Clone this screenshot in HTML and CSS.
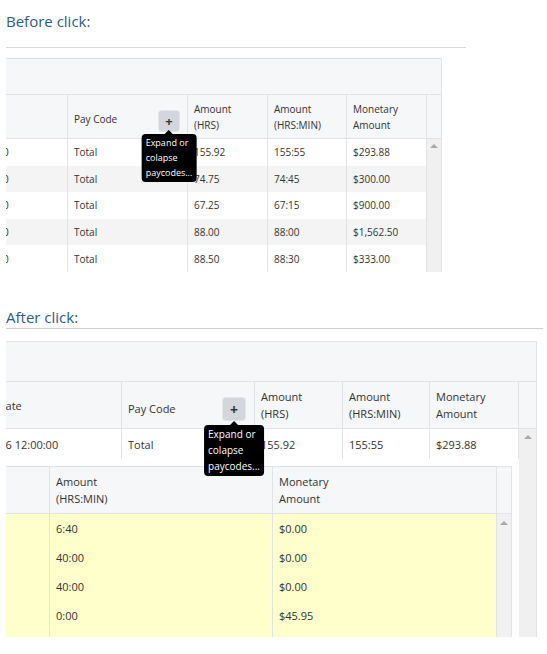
FILE: index.html
```html
<!DOCTYPE html>
<html lang="en">
<head>
    <meta charset="UTF-8">
    <meta name="viewport" content="width=device-width, initial-scale=1.0">
    <title>Pay Code Grid - Expand / Collapse</title>
    <link rel="stylesheet" href="styles.css">
</head>
<body>

<!-- Collapsed state -->
<h3 class="step-title step-before">Before click:</h3>
<hr class="step-rule rule-short">

<div class="grid grid-sm">
    <div class="grid-band"></div>
    <table class="grid-table">
        <colgroup>
            <col style="width:149px">
            <col style="width:120px">
            <col style="width:80px">
            <col style="width:79px">
            <col style="width:80px">
            <col style="width:14px">
        </colgroup>
        <thead>
            <tr class="head-row">
                <th class="date-col">Apply Date</th>
                <th>
                    <div class="code-head">
                        <span>Pay Code</span>
                        <span class="toggle">+<span class="tip">Expand or<br>colapse<br>paycodes...</span></span>
                    </div>
                </th>
                <th>Amount<br>(HRS)</th>
                <th>Amount<br>(HRS:MIN)</th>
                <th>Monetary<br>Amount</th>
                <th class="scroll-head"></th>
            </tr>
        </thead>
        <tbody>
            <tr>
                <td class="date-col">1/1/2016 12:00:00</td>
                <td>Total</td>
                <td>155.92</td>
                <td>155:55</td>
                <td>$293.88</td>
                <td class="scroll" rowspan="5"><span class="scroll-up"></span></td>
            </tr>
            <tr>
                <td class="date-col">1/1/2016 12:00:00</td>
                <td>Total</td>
                <td>74.75</td>
                <td>74:45</td>
                <td>$300.00</td>
            </tr>
            <tr>
                <td class="date-col">1/1/2016 12:00:00</td>
                <td>Total</td>
                <td>67.25</td>
                <td>67:15</td>
                <td>$900.00</td>
            </tr>
            <tr>
                <td class="date-col">1/1/2016 12:00:00</td>
                <td>Total</td>
                <td>88.00</td>
                <td>88:00</td>
                <td>$1,562.50</td>
            </tr>
            <tr>
                <td class="date-col">1/1/2016 12:00:00</td>
                <td>Total</td>
                <td>88.50</td>
                <td>88:30</td>
                <td>$333.00</td>
            </tr>
        </tbody>
    </table>
</div>

<!-- Expanded state -->
<h3 class="step-title step-after">After click:</h3>
<hr class="step-rule rule-long">

<div class="grid grid-lg">
    <div class="grid-band"></div>
    <table class="grid-table">
        <colgroup>
            <col style="width:164px">
            <col style="width:133px">
            <col style="width:88px">
            <col style="width:87px">
            <col style="width:89px">
            <col style="width:17px">
        </colgroup>
        <thead>
            <tr class="head-row">
                <th class="date-col">Apply Date</th>
                <th>
                    <div class="code-head">
                        <span>Pay Code</span>
                        <span class="toggle">+<span class="tip">Expand or<br>colapse<br>paycodes...</span></span>
                    </div>
                </th>
                <th>Amount<br>(HRS)</th>
                <th>Amount<br>(HRS:MIN)</th>
                <th>Monetary<br>Amount</th>
                <th class="scroll-head"></th>
            </tr>
        </thead>
        <tbody>
            <tr class="main-row">
                <td class="date-col">1/1/2016 12:00:00</td>
                <td>Total</td>
                <td>155.92</td>
                <td>155:55</td>
                <td>$293.88</td>
                <td class="scroll" rowspan="2"><span class="scroll-up"></span></td>
            </tr>
            <tr>
                <td class="detail-cell" colspan="5">
                    <!-- paycode breakdown -->
                    <div class="detail-grid">
                        <table class="grid-table detail-table">
                            <colgroup>
                                <col style="width:92px">
                                <col style="width:223px">
                                <col style="width:224px">
                                <col style="width:14px">
                            </colgroup>
                            <thead>
                                <tr class="head-row">
                                    <th></th>
                                    <th>Amount<br>(HRS:MIN)</th>
                                    <th>Monetary<br>Amount</th>
                                    <th class="scroll-head"></th>
                                </tr>
                            </thead>
                            <tbody>
                                <tr>
                                    <td></td>
                                    <td>6:40</td>
                                    <td>$0.00</td>
                                    <td class="scroll" rowspan="5"><span class="scroll-up"></span></td>
                                </tr>
                                <tr>
                                    <td></td>
                                    <td>40:00</td>
                                    <td>$0.00</td>
                                </tr>
                                <tr>
                                    <td></td>
                                    <td>40:00</td>
                                    <td>$0.00</td>
                                </tr>
                                <tr>
                                    <td></td>
                                    <td>0:00</td>
                                    <td>$45.95</td>
                                </tr>
                                <tr>
                                    <td></td>
                                    <td>8:00</td>
                                    <td>$0.00</td>
                                </tr>
                            </tbody>
                        </table>
                    </div>
                </td>
            </tr>
        </tbody>
    </table>
</div>

</body>
</html>
```

FILE: styles.css
```css
/* Base */
* {
    box-sizing: border-box;
}

body {
    margin: 0;
    padding: 0 0 0 6px;
    background: #fff;
    color: #333;
    font-family: "Open Sans", "Noto Sans", sans-serif;
}

/* Step headings */
.step-title {
    margin: 0;
    font-size: 15px;
    font-weight: normal;
    line-height: 20px;
    color: #2b5c8f;
}

.step-before {
    padding-top: 11px;
}

.step-after {
    margin-top: 35px;
}

.step-rule {
    height: 0;
    margin: 0;
    border: 0;
    border-top: 1px solid #d9d9d9;
}

.rule-short {
    width: 460px;
    margin-top: 16px;
}

.rule-long {
    width: 537px;
    margin-top: 1px;
    border-top-color: #cfcfcf;
}

/* Grid wrapper - scrolled to the right, clipped at the bottom */
.grid {
    overflow: hidden;
    border-top: 1px solid #e1e3e6;
    border-right: 1px solid #e1e3e6;
}

.grid-sm {
    width: 436px;
    height: 214px;
    margin-top: 10px;
}

.grid-lg {
    width: 531px;
    height: 296px;
    margin-top: 12px;
}

.grid-band {
    background: #f6f7f9;
    border-bottom: 1px solid #e1e3e6;
}

.grid-sm .grid-band {
    height: 36px;
}

.grid-lg .grid-band {
    height: 40px;
}

/* Tables */
.grid-table {
    border-collapse: separate;
    border-spacing: 0;
    table-layout: fixed;
}

.grid-sm .grid-table {
    width: 522px;
    margin-left: -87px;
    font-size: 10px;
}

.grid-lg .grid-table {
    width: 578px;
    margin-left: -48px;
    font-size: 11px;
}

.grid-table th {
    padding: 0 6px;
    background: #f6f7f9;
    font-weight: normal;
    text-align: left;
    vertical-align: middle;
    border-right: 1px solid #e1e3e6;
    border-bottom: 1px solid #e1e3e6;
    white-space: nowrap;
}

.grid-table td {
    padding: 0 6px;
    background: #fff;
    border-right: 1px solid #e1e3e6;
    white-space: nowrap;
    vertical-align: middle;
}

.grid-lg .grid-table .date-col {
    padding-left: 8px;
}

.grid-sm .head-row {
    height: 44px;
    line-height: 16px;
}

.grid-sm tbody tr {
    height: 26.6px;
}

.grid-sm tbody tr:nth-child(even) td {
    background: #f4f4f4;
}

.grid-lg .head-row {
    height: 47px;
    line-height: 17px;
}

.grid-lg .main-row {
    height: 30px;
}

/* Scrollbar track */
.grid-table th.scroll-head {
    padding: 0;
    border-right: 0;
}

.grid-table td.scroll {
    padding: 0;
    vertical-align: top;
    background: #f0f0f0;
    border-right: 0;
}

.scroll-up {
    display: block;
    width: 0;
    height: 0;
    margin: 5px auto 0;
    border-left: 4px solid transparent;
    border-right: 4px solid transparent;
    border-bottom: 4px solid #a9a9a9;
}

.grid-lg .scroll-up {
    margin-top: 6px;
}

/* Pay code header with toggle button */
.code-head {
    display: flex;
    align-items: center;
    justify-content: space-between;
    padding-top: 5px;
}

.toggle {
    position: relative;
    display: flex;
    align-items: center;
    justify-content: center;
    width: 20px;
    height: 20px;
    margin: 3px 2px 0 0;
    border-radius: 3px;
    background: #d3d6dc;
    box-shadow: 0 0 0 1px #e3e5e9;
    font-size: 13px;
    font-weight: bold;
    color: #333;
}

.grid-lg .code-head {
    padding-top: 6px;
}

.grid-lg .toggle {
    width: 22px;
    height: 22px;
    margin: 2px 3px 0 0;
    font-size: 14px;
}

.tip {
    position: absolute;
    top: calc(100% + 3px);
    left: 50%;
    z-index: 2;
    transform: translateX(-50%);
    padding: 1px 4px 2px;
    border-radius: 4px;
    background: #000;
    color: #fff;
    font-size: 9px;
    font-weight: normal;
    line-height: 15px;
    text-align: left;
    white-space: nowrap;
}

.tip::before {
    content: "";
    position: absolute;
    top: -4px;
    left: 50%;
    margin-left: -4px;
    border-left: 4px solid transparent;
    border-right: 4px solid transparent;
    border-bottom: 4px solid #000;
}

.grid-lg .tip {
    top: calc(100% + 5px);
    font-size: 10px;
    line-height: 16px;
}

/* Expanded paycode breakdown */
.grid-table td.detail-cell {
    padding: 7px 7px 0 0;
    vertical-align: top;
    border-right: 0;
}

.detail-grid {
    border-top: 1px solid #e1e3e6;
    border-right: 1px solid #e1e3e6;
}

.grid-lg .detail-table {
    width: 553px;
    margin-left: 0;
}

.detail-table tbody tr {
    height: 29px;
}

.detail-table td {
    background: #ffffcc;
}

.detail-table td.scroll {
    background: #f1f1f1;
}

.detail-table .scroll-up {
    margin-top: 7px;
}
```
